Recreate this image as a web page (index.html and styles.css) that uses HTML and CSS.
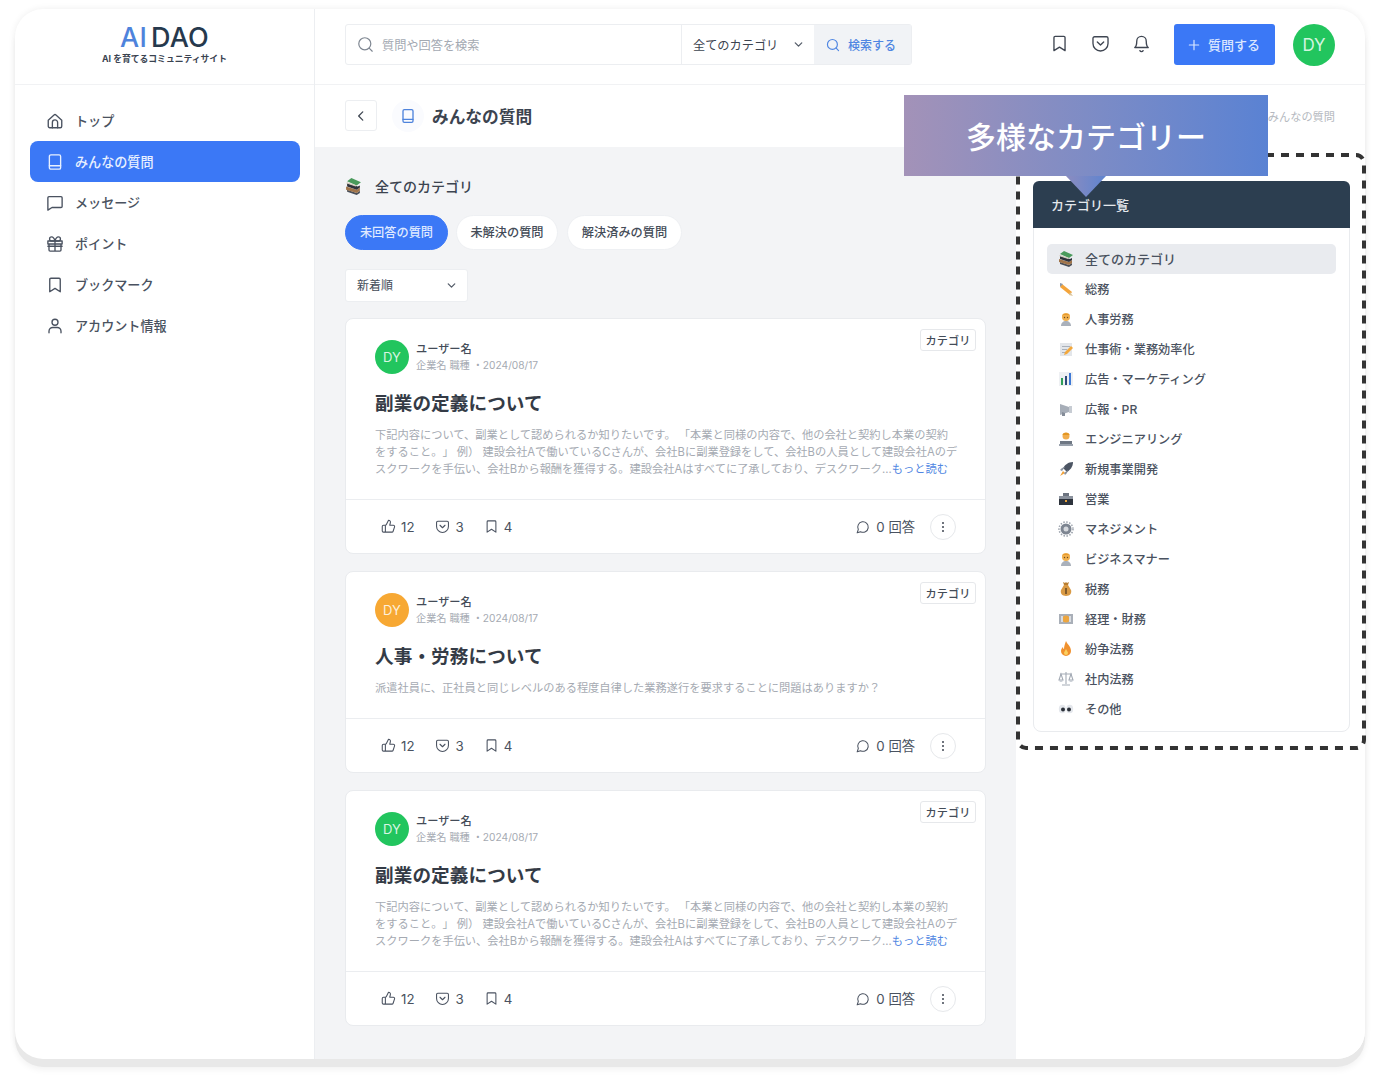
FILE: index.html
```html
<!DOCTYPE html>
<html lang="ja">
<head>
<meta charset="utf-8">
<title>AI DAO</title>
<link rel="stylesheet" href="styles.css">
</head>
<body>
<svg class="defs" width="0" height="0" aria-hidden="true">
  <symbol id="i-home" viewBox="0 0 24 24"><path d="M3 11 10.700 3.900a2 2 0 0 1 2.600 0L21 11v8a2 2 0 0 1-2 2H5a2 2 0 0 1-2-2z"/><path d="M8.500 21v-7a3.500 3.500 0 0 1 7 0v7"/></symbol>
  <symbol id="i-book" viewBox="0 0 24 24"><path d="M6.500 2.500h11a2 2 0 0 1 2 2v15a2 2 0 0 1-2 2h-11a2 2 0 0 1-2-2v-15a2 2 0 0 1 2-2z"/><path d="M4.500 17h15"/></symbol>
  <symbol id="i-msg" viewBox="0 0 24 24"><path d="M4 3.500h16a1.500 1.500 0 0 1 1.500 1.500v11.500a1.500 1.500 0 0 1-1.500 1.500H8l-5.500 3.500V5A1.500 1.500 0 0 1 4 3.500z"/></symbol>
  <symbol id="i-gift" viewBox="0 0 24 24"><path d="M2.500 8h19v4h-19zM4 12v8a1.500 1.500 0 0 0 1.500 1.500h13A1.500 1.500 0 0 0 20 20v-8M12 8v13.500M2.500 15h19"/><path d="M12 8S10.500 2.500 7.500 2.500a2.700 2.700 0 0 0 0 5.500zM12 8s1.500-5.500 4.500-5.500a2.700 2.700 0 0 1 0 5.500z"/></symbol>
  <symbol id="i-mark" viewBox="0 0 24 24"><path d="M6.500 3h11A1.500 1.500 0 0 1 19 4.500V21l-7-4.500L5 21V4.500A1.500 1.500 0 0 1 6.500 3z"/></symbol>
  <symbol id="i-user" viewBox="0 0 24 24"><circle cx="12" cy="7" r="4"/><path d="M4 21v-2a5 5 0 0 1 5-5h6a5 5 0 0 1 5 5v2"/></symbol>
  <symbol id="i-search" viewBox="0 0 24 24"><circle cx="11" cy="11" r="8.500"/><path d="m17.500 17.500 4 4"/></symbol>
  <symbol id="i-pocket" viewBox="0 0 24 24"><path d="M4.500 3.500h15a2 2 0 0 1 2 2V12a9.500 9.500 0 0 1-19 0V5.500a2 2 0 0 1 2-2z"/><path d="m8 10 4 4 4-4"/></symbol>
  <symbol id="i-bell" viewBox="0 0 24 24"><path d="M6 9a6 6 0 0 1 12 0c0 6 2.500 8 2.500 8h-17S6 15 6 9z"/><path d="M10 21a2.200 2.200 0 0 0 4 0"/></symbol>
  <symbol id="i-thumb" viewBox="0 0 24 24"><path d="M7 10v11M15 5.900 14 10h5.800a2 2 0 0 1 1.900 2.600l-2.300 7A2 2 0 0 1 17.500 21H4a2 2 0 0 1-2-2v-7a2 2 0 0 1 2-2h2.800a2 2 0 0 0 1.800-1.100L12 2a3 3 0 0 1 3 3.900z"/></symbol>
  <symbol id="i-comment" viewBox="0 0 24 24"><path d="M7.900 20A9 9 0 1 0 4 16.100L2 22z"/></symbol>
  <symbol id="i-plus" viewBox="0 0 24 24"><path d="M12 4v16M4 12h16"/></symbol>
  <symbol id="i-down" viewBox="0 0 24 24"><path d="m6 9 6 6 6-6"/></symbol>
  <symbol id="i-left" viewBox="0 0 24 24"><path d="m15 5-7 7 7 7"/></symbol>

  <symbol id="e-books" viewBox="0 0 16 16"><path fill="#4a4f58" d="M2 11l9 3 3-2v2l-3 2-9-3z"/><path fill="#a0744a" d="M1 8l10 3 3-2v3l-3 2-10-3z"/><path fill="#2f323c" d="M2 5l10 3 2-1v2l-3 2-9-3z"/><path fill="#4a9a5c" d="M2 3l4-3 9 4-4 3z"/><path fill="#d4ccbc" d="M2 4l9 3-1 1-9-3z"/></symbol>
  <symbol id="e-pencil" viewBox="0 0 16 16"><path fill="#f4a43a" d="M4 3l10 8-2 3L2 6z"/><path fill="#8d98a8" d="M2 2l3 1-3 3z"/><path fill="#d9c49c" d="M12 11l3 4-4-1z"/></symbol>
  <symbol id="e-person" viewBox="0 0 16 16"><path fill="#aab1bb" d="M3 15c0-3 2-5 5-5s5 2 5 5z"/><circle cx="8" cy="6" r="4" fill="#f2b04c"/><path fill="#e59a2e" d="M4 5c0-3 8-3 8 0l-1-1H5z"/><circle cx="6.500" cy="6.500" r=".7" fill="#6b4a1e"/><circle cx="9.500" cy="6.500" r=".7" fill="#6b4a1e"/></symbol>
  <symbol id="e-memo" viewBox="0 0 16 16"><path fill="#e3e6ea" d="M2 2h12v13H2z"/><path fill="#a9b0ba" d="M4 5h8v1H4zM4 8h5v1H4zM4 11h3v1H4z"/><path fill="#f3a83c" d="M13 5l2 2-6 6-3 1 1-3z"/></symbol>
  <symbol id="e-chart" viewBox="0 0 16 16"><path fill="#eef0f3" d="M1 1h14v14H1z"/><path fill="#2f9e58" d="M3 7h2v7H3z"/><path fill="#2f4a7a" d="M7 5h2v9H7z"/><path fill="#3f7ad6" d="M11 2h2v12h-2z"/></symbol>
  <symbol id="e-mega" viewBox="0 0 16 16"><path fill="#a7aeb8" d="M2 3l9 3v5l-9 3z"/><path fill="#c7ccd3" d="M11 5h3v7h-3z"/><path fill="#848c98" d="M4 11l3 1v3H4z"/></symbol>
  <symbol id="e-tech" viewBox="0 0 16 16"><circle cx="8" cy="5" r="3.500" fill="#f0ad4e"/><path fill="#e39622" d="M4.500 4c0-3 7-3 7 0z"/><path fill="#6f7884" d="M2 10h12v3H2z"/><path fill="#9aa2ad" d="M1 13h14v2H1z"/></symbol>
  <symbol id="e-rocket" viewBox="0 0 16 16"><path fill="#4c5563" d="M15 1c0 5-3 8-6 10L5 7c2-3 5-6 10-6z"/><path fill="#f1a23a" d="M5 10l2 2-5 3z"/><path fill="#8a93a0" d="M4 7l3-1-3 4-2-1zM9 12l1-3-4 3 1 2z"/></symbol>
  <symbol id="e-office" viewBox="0 0 16 16"><path fill="#6d7480" d="M5 2h6v3H5z"/><path fill="#2d333c" d="M1 5h14v9H1z"/><path fill="#8b929d" d="M1 5h14v3H1z"/><path fill="#e9a23a" d="M7 9h2v2H7z"/></symbol>
  <symbol id="e-gear" viewBox="0 0 16 16"><circle cx="8" cy="8" r="5.500" fill="#7d8591"/><circle cx="8" cy="8" r="7" fill="none" stroke="#9aa1ab" stroke-width="1.500" stroke-dasharray="1.500 1.500"/><circle cx="8" cy="8" r="2.500" fill="#d5d8dd"/></symbol>
  <symbol id="e-bag" viewBox="0 0 16 16"><path fill="#d99a45" d="M6 4h4l3 5c1 3-1 6-5 6s-6-3-5-6z"/><path fill="#b97e30" d="M5 1l2 1 1-1 1 1 2-1-1 3H6z"/><path fill="#5b4020" d="M7.300 7h1.400v6H7.300z"/></symbol>
  <symbol id="e-money" viewBox="0 0 16 16"><path fill="#a9afb8" d="M1 3h14v10H1z"/><circle cx="8" cy="8" r="3.500" fill="#eda63f"/><path fill="#d9dce1" d="M3 5h2v6H3zM11 5h2v6h-2z"/></symbol>
  <symbol id="e-fire" viewBox="0 0 16 16"><path fill="#f0912e" d="M8 0c1 3 5 5 5 10a5 5 0 0 1-10 0c0-2 1-3 2-4 0 2 1 2 1 2 0-3 1-5 2-8z"/><path fill="#fbd05f" d="M8 8c1 2 2 3 2 4a2 2 0 0 1-4 0c0-1 1-2 2-4z"/></symbol>
  <symbol id="e-scale" viewBox="0 0 16 16"><path fill="none" stroke="#a4abb5" stroke-width="1.100" d="M8 1v12M2 3h12M3 3l-2 6h4zM13 3l-2 6h4zM4 14h8"/><path fill="#c6cbd2" d="M1 9h4a2 2 0 0 1-4 0zM11 9h4a2 2 0 0 1-4 0z"/></symbol>
  <symbol id="e-eyes" viewBox="0 0 16 16"><ellipse cx="4.300" cy="8" rx="3.500" ry="4.300" fill="#e4e7ec"/><ellipse cx="11.700" cy="8" rx="3.500" ry="4.300" fill="#e4e7ec"/><circle cx="5" cy="8.500" r="2" fill="#2a2f38"/><circle cx="11" cy="8.500" r="2" fill="#2a2f38"/></symbol>
</svg>

<div class="window">
  <aside class="sidebar">
    <div class="logo">
      <div class="logo-mark"><span class="logo-ai">AI</span><span class="logo-dao">DAO</span></div>
      <div class="logo-sub">AI を育てるコミュニティサイト</div>
    </div>
    <nav class="nav">
      <a class="nav-item"><svg class="icon nav-icon"><use href="#i-home"/></svg>トップ</a>
      <a class="nav-item active"><svg class="icon nav-icon"><use href="#i-book"/></svg>みんなの質問</a>
      <a class="nav-item"><svg class="icon nav-icon"><use href="#i-msg"/></svg>メッセージ</a>
      <a class="nav-item"><svg class="icon nav-icon"><use href="#i-gift"/></svg>ポイント</a>
      <a class="nav-item"><svg class="icon nav-icon"><use href="#i-mark"/></svg>ブックマーク</a>
      <a class="nav-item"><svg class="icon nav-icon"><use href="#i-user"/></svg>アカウント情報</a>
    </nav>
  </aside>

  <div class="main">
    <header class="topbar">
      <div class="search">
        <div class="search-input"><svg class="icon search-icon"><use href="#i-search"/></svg>質問や回答を検索</div>
        <div class="search-select">全てのカテゴリ<svg class="icon chev"><use href="#i-down"/></svg></div>
        <div class="search-btn"><svg class="icon search-icon-blue"><use href="#i-search"/></svg>検索する</div>
      </div>
      <div class="top-actions">
        <svg class="icon top-icon"><use href="#i-mark"/></svg>
        <svg class="icon top-icon"><use href="#i-pocket"/></svg>
        <svg class="icon top-icon"><use href="#i-bell"/></svg>
        <div class="ask-btn"><svg class="icon plus"><use href="#i-plus"/></svg>質問する</div>
        <div class="avatar-top">DY</div>
      </div>
    </header>

    <div class="titlebar">
      <div class="back"><svg class="icon back-icon"><use href="#i-left"/></svg></div>
      <div class="title-icon"><svg class="icon book-blue"><use href="#i-book"/></svg></div>
      <h1 class="page-title">みんなの質問</h1>
      <div class="crumb">みんなの質問</div>
    </div>

    <div class="body">
      <main class="content">
        <div class="cat-heading"><svg class="emoji-lg"><use href="#e-books"/></svg>全てのカテゴリ</div>
        <div class="pills">
          <span class="pill pill-on">未回答の質問</span>
          <span class="pill">未解決の質問</span>
          <span class="pill pill-wide">解決済みの質問</span>
        </div>
        <div class="sort">新着順<svg class="icon chev"><use href="#i-down"/></svg></div>

        <article class="card">
          <span class="tag">カテゴリ</span>
          <div class="card-main">
            <div class="author">
              <div class="avatar green">DY</div>
              <div><div class="name">ユーザー名</div><div class="meta">企業名 職種 ・2024/08/17</div></div>
            </div>
            <h2 class="card-title">副業の定義について</h2>
            <p class="desc">下記内容について、副業として認められるか知りたいです。 「本業と同様の内容で、他の会社と契約し本業の契約をすること。」 例） 建設会社Aで働いているCさんが、会社Bに副業登録をして、会社Bの人員として建設会社Aのデスクワークを手伝い、会社Bから報酬を獲得する。建設会社Aはすべてに了承しており、デスクワーク...<span class="more">もっと読む</span></p>
          </div>
          <div class="card-foot">
            <span class="stat stat-like"><svg class="icon stat-icon"><use href="#i-thumb"/></svg>12</span>
            <span class="stat stat-pocket"><svg class="icon stat-icon"><use href="#i-pocket"/></svg>3</span>
            <span class="stat"><svg class="icon stat-icon"><use href="#i-mark"/></svg>4</span>
            <span class="stat answers"><svg class="icon stat-icon-sm"><use href="#i-comment"/></svg>0 回答</span>
            <span class="more-btn"><i></i><i></i><i></i></span>
          </div>
        </article>

        <article class="card">
          <span class="tag">カテゴリ</span>
          <div class="card-main">
            <div class="author">
              <div class="avatar orange">DY</div>
              <div><div class="name">ユーザー名</div><div class="meta">企業名 職種 ・2024/08/17</div></div>
            </div>
            <h2 class="card-title">人事・労務について</h2>
            <p class="desc">派遣社員に、正社員と同じレベルのある程度自律した業務遂行を要求することに問題はありますか？</p>
          </div>
          <div class="card-foot">
            <span class="stat stat-like"><svg class="icon stat-icon"><use href="#i-thumb"/></svg>12</span>
            <span class="stat stat-pocket"><svg class="icon stat-icon"><use href="#i-pocket"/></svg>3</span>
            <span class="stat"><svg class="icon stat-icon"><use href="#i-mark"/></svg>4</span>
            <span class="stat answers"><svg class="icon stat-icon-sm"><use href="#i-comment"/></svg>0 回答</span>
            <span class="more-btn"><i></i><i></i><i></i></span>
          </div>
        </article>

        <article class="card">
          <span class="tag">カテゴリ</span>
          <div class="card-main">
            <div class="author">
              <div class="avatar green">DY</div>
              <div><div class="name">ユーザー名</div><div class="meta">企業名 職種 ・2024/08/17</div></div>
            </div>
            <h2 class="card-title">副業の定義について</h2>
            <p class="desc">下記内容について、副業として認められるか知りたいです。 「本業と同様の内容で、他の会社と契約し本業の契約をすること。」 例） 建設会社Aで働いているCさんが、会社Bに副業登録をして、会社Bの人員として建設会社Aのデスクワークを手伝い、会社Bから報酬を獲得する。建設会社Aはすべてに了承しており、デスクワーク...<span class="more">もっと読む</span></p>
          </div>
          <div class="card-foot">
            <span class="stat stat-like"><svg class="icon stat-icon"><use href="#i-thumb"/></svg>12</span>
            <span class="stat stat-pocket"><svg class="icon stat-icon"><use href="#i-pocket"/></svg>3</span>
            <span class="stat"><svg class="icon stat-icon"><use href="#i-mark"/></svg>4</span>
            <span class="stat answers"><svg class="icon stat-icon-sm"><use href="#i-comment"/></svg>0 回答</span>
            <span class="more-btn"><i></i><i></i><i></i></span>
          </div>
        </article>
      </main>

      <aside class="side">
        <svg class="dash" viewBox="0 0 350 598"><rect x="2" y="2" width="346" height="593" rx="8"/></svg>
        <section class="panel">
          <div class="panel-head">カテゴリ一覧</div>
          <ul class="cats">
            <li class="cat cat-on"><svg class="emoji"><use href="#e-books"/></svg>全てのカテゴリ</li>
            <li class="cat"><svg class="emoji"><use href="#e-pencil"/></svg>総務</li>
            <li class="cat"><svg class="emoji"><use href="#e-person"/></svg>人事労務</li>
            <li class="cat"><svg class="emoji"><use href="#e-memo"/></svg>仕事術・業務効率化</li>
            <li class="cat"><svg class="emoji"><use href="#e-chart"/></svg>広告・マーケティング</li>
            <li class="cat"><svg class="emoji"><use href="#e-mega"/></svg>広報・PR</li>
            <li class="cat"><svg class="emoji"><use href="#e-tech"/></svg>エンジニアリング</li>
            <li class="cat"><svg class="emoji"><use href="#e-rocket"/></svg>新規事業開発</li>
            <li class="cat"><svg class="emoji"><use href="#e-office"/></svg>営業</li>
            <li class="cat"><svg class="emoji"><use href="#e-gear"/></svg>マネジメント</li>
            <li class="cat"><svg class="emoji"><use href="#e-person"/></svg>ビジネスマナー</li>
            <li class="cat"><svg class="emoji"><use href="#e-bag"/></svg>税務</li>
            <li class="cat"><svg class="emoji"><use href="#e-money"/></svg>経理・財務</li>
            <li class="cat"><svg class="emoji"><use href="#e-fire"/></svg>紛争法務</li>
            <li class="cat"><svg class="emoji"><use href="#e-scale"/></svg>社内法務</li>
            <li class="cat"><svg class="emoji"><use href="#e-eyes"/></svg>その他</li>
          </ul>
        </section>
      </aside>
    </div>
  </div>

  <div class="callout">多様なカテゴリー</div>
</div>
</body>
</html>
```

FILE: styles.css
```css
* { box-sizing: border-box; }
html, body { margin: 0; height: 100%; overflow: hidden; background: #fff; }
body {
  font-family: Inter, "Noto Sans CJK JP", sans-serif;
  color: #3c4450;
  padding: 9px 0 0 15px;
  text-spacing-trim: space-all;
}
.defs { position: absolute; }
.icon { fill: none; stroke: currentColor; stroke-width: 2; stroke-linecap: round; stroke-linejoin: round; flex: none; }

.window {
  position: relative;
  width: 1350px;
  height: 1050px;
  border-radius: 28px;
  background: #fff;
  display: flex;
  box-shadow: 0 8px 0 #e8e8e8, 0 11px 6px rgba(0,0,0,.05), 0 0 7px rgba(0,0,0,.07);
}

/* sidebar */
.sidebar { width: 300px; flex: none; border-right: 1px solid #eceef1; }
.logo { height: 76px; border-bottom: 1px solid #f1f2f4; display: flex; flex-direction: column; align-items: center; padding-top: 15px; }
.logo-mark { font-size: 27px; line-height: 28px; font-weight: 500; letter-spacing: .2px; }
.logo-ai { color: #4e83dc; margin-right: 4px; }
.logo-dao { color: #26394d; }
.logo-sub { font-size: 8.800px; line-height: 14px; font-weight: 700; color: #3a4350; }
.nav { padding: 15px 14px 0 15px; display: flex; flex-direction: column; }
.nav-item { height: 41px; display: flex; align-items: center; padding-left: 16px; border-radius: 8px; font-size: 13.100px; font-weight: 500; color: #4a5260; gap: 11px; }
.nav-item.active { background: #3b78f6; color: #e8f0ff; }
.nav-icon { width: 18px; height: 18px; stroke-width: 1.800; }

/* main */
.main { flex: 1; min-width: 0; display: flex; flex-direction: column; }
.topbar { height: 76px; flex: none; border-bottom: 1px solid #f1f2f4; display: flex; align-items: center; padding: 0 30px 4px; justify-content: space-between; }
.search { display: flex; height: 41px; width: 567px; border: 1px solid #eceef1; border-radius: 3px; font-size: 12.200px; }
.search-input { width: 336px; display: flex; align-items: center; padding-left: 11px; gap: 8px; color: #a3a9b2; border-right: 1px solid #eceef1; }
.search-icon { width: 17px; height: 17px; stroke-width: 1.700; color: #7f8792; }
.search-select { width: 132px; display: flex; align-items: center; padding-left: 11px; color: #3c4450; }
.chev { width: 13px; height: 13px; margin-left: auto; margin-right: 9px; stroke-width: 2.400; color: #555d69; }
.search-btn { flex: 1; background: #f1f3f6; color: #4f86e2; display: flex; align-items: center; padding-left: 12px; gap: 8px; font-weight: 500; font-size: 12px; }
.search-icon-blue { width: 14px; height: 14px; stroke-width: 2; }
.top-actions { display: flex; align-items: center; }
.top-icon { width: 19px; height: 19px; color: #3f4652; stroke-width: 1.700; margin-right: 22px; margin-top: -3px; }
.top-icon:nth-child(3) { margin-right: 23px; }
.ask-btn { width: 101px; height: 41px; background: #3b78f6; color: #dbe7ff; border-radius: 3px; display: flex; align-items: center; padding-left: 13px; gap: 7px; font-size: 13px; font-weight: 500; }
.plus { width: 14px; height: 14px; stroke-width: 2; }
.avatar-top { width: 42px; height: 42px; border-radius: 50%; background: #22c55e; color: #d3f5e0; display: flex; align-items: center; justify-content: center; font-size: 17px; margin-left: 18px; }

.titlebar { height: 62px; flex: none; display: flex; align-items: center; padding: 0 30px; }
.back { width: 32px; height: 31px; border: 1px solid #eceef1; border-radius: 3px; display: flex; align-items: center; justify-content: center; margin-top: -1px; }
.back-icon { width: 14px; height: 14px; color: #3f4652; stroke-width: 2.200; }
.title-icon { width: 32px; height: 32px; margin-left: 15px; border-radius: 50%; background: #fafbfe; display: flex; align-items: center; justify-content: center; color: #4e83dc; }
.book-blue { width: 16px; height: 16px; }
.page-title { margin: 2px 0 0 8px; font-size: 16.700px; line-height: 24px; font-weight: 700; color: #3c4450; }
.crumb { margin-left: auto; font-size: 11.200px; color: #b5b9c0; }

.body { flex: 1; min-height: 0; display: flex; }
.content { width: 701px; flex: none; background: #f3f4f6; padding: 30px 30px 0; }
.cat-heading { display: flex; align-items: center; height: 20px; padding-bottom: 2px; font-size: 14px; font-weight: 500; color: #3c4450; gap: 13px; }
.emoji-lg { width: 17px; height: 17px; flex: none; }
.pills { display: flex; gap: 8px; margin-top: 18px; }
.pill { height: 35px; width: 102px; padding-bottom: 2px; background: #fff; border: 1px solid #eef0f3; border-radius: 18px; display: flex; align-items: center; justify-content: center; font-size: 12.200px; font-weight: 500; color: #444c58; }
.pill-on { width: 103px; background: #3b78f6; border-color: #3b78f6; color: #dfe9ff; }
.pill-wide { width: 115px; margin-left: 1px; }
.sort { width: 123px; height: 33px; margin-top: 19px; padding-bottom: 2px; background: #fff; border: 1px solid #eceef1; border-radius: 3px; display: flex; align-items: center; padding-left: 11px; font-size: 12px; color: #444c58; }
.sort .chev { margin-top: 2px; }

.card { position: relative; background: #fff; border: 1px solid #e9ebee; border-radius: 8px; margin-top: 17px; }
.sort + .card { margin-top: 16px; }
.tag { position: absolute; top: 10px; right: 9px; width: 56px; height: 22px; background: #fff; border: 1px solid #e6e8eb; border-radius: 3px; display: flex; align-items: center; justify-content: center; font-size: 11.200px; font-weight: 500; color: #444c58; }
.card-main { padding: 21px 26px 21px 29px; border-bottom: 1px solid #ebedf0; }
.author { display: flex; align-items: center; gap: 7px; height: 34px; }
.avatar { width: 34px; height: 34px; border-radius: 50%; display: flex; align-items: center; justify-content: center; font-size: 13px; flex: none; color: #d8f5e3; }
.green { background: #22c55e; }
.orange { background: #f7a833; color: #fdf0db; }
.name { font-size: 11.200px; line-height: 15px; font-weight: 500; color: #444c58; }
.meta { font-size: 10.200px; line-height: 16px; color: #a5aab2; }
.card-title { margin: 16px 0 0; font-size: 18.600px; letter-spacing: .1px; line-height: 26px; font-weight: 700; color: #343b46; }
.desc { margin: 11px 0 0; font-size: 11.240px; line-height: 17px; color: #a5aab2; }
.more { color: #4f86e2; }
.card-foot { height: 53px; display: flex; align-items: center; padding: 0 29px 0 35px; font-size: 13.300px; color: #4a5260; }
.stat { display: flex; align-items: center; gap: 5px; }
.stat-like { margin-right: 20px; }
.stat-pocket { margin-right: 20px; gap: 6px; }
.stat-icon { width: 15px; height: 15px; stroke-width: 1.700; }
.stat-icon-sm { width: 14px; height: 14px; stroke-width: 1.800; }
.answers { margin-left: auto; gap: 6px; }
.more-btn { width: 26px; height: 26px; margin-left: 15px; border: 1px solid #e6e8eb; border-radius: 50%; display: flex; flex-direction: column; align-items: center; justify-content: center; gap: 2px; }
.more-btn i { width: 2px; height: 2px; border-radius: 50%; background: #3f4652; }

/* right column */
.side { position: relative; flex: 1; padding: 34px 15px 0 17px; background: #fff; border-bottom-right-radius: 28px; }
.dash { position: absolute; left: 0; top: 6px; width: 350px; height: 598px; fill: none; stroke: #333; stroke-width: 4; stroke-dasharray: 8 7; pointer-events: none; }
.panel { position: relative; border: 1px solid #e9ebee; border-radius: 8px; }
.panel-head { margin: -1px -1px 0; height: 47px; background: #2c3e50; color: #e4e8ec; border-radius: 6px 6px 0 0; display: flex; align-items: center; padding-left: 18px; font-size: 13px; font-weight: 500; }
.cats { list-style: none; margin: 0; padding: 16px 13px 7px; }
.cat { height: 30px; display: flex; align-items: center; padding-left: 11px; gap: 11px; font-size: 12.200px; font-weight: 500; color: #4a5260; }
.cat + .cat { padding-bottom: 1px; }
.cat-on { background: #e9ebef; border-radius: 5px; font-size: 13px; padding-bottom: 2px; }
.emoji { width: 16px; height: 16px; flex: none; margin-top: 1px; }

/* overlay */
.callout {
  position: absolute;
  left: 889px;
  top: 86px;
  width: 364px;
  height: 81px;
  padding: 0 0 2px 62px;
  display: flex;
  align-items: center;
  font-size: 30px;
  font-weight: 500;
  color: #fff;
  background: linear-gradient(90deg, #a392b8 0%, #7e8cc5 50%, #5a82d3 100%);
}
.callout::after {
  content: "";
  position: absolute;
  left: 162px;
  top: 81px;
  width: 40px;
  height: 21px;
  clip-path: polygon(0 0, 100% 0, 50% 100%);
  background: linear-gradient(90deg, #8b8cc0, #5f84cf);
}
```
